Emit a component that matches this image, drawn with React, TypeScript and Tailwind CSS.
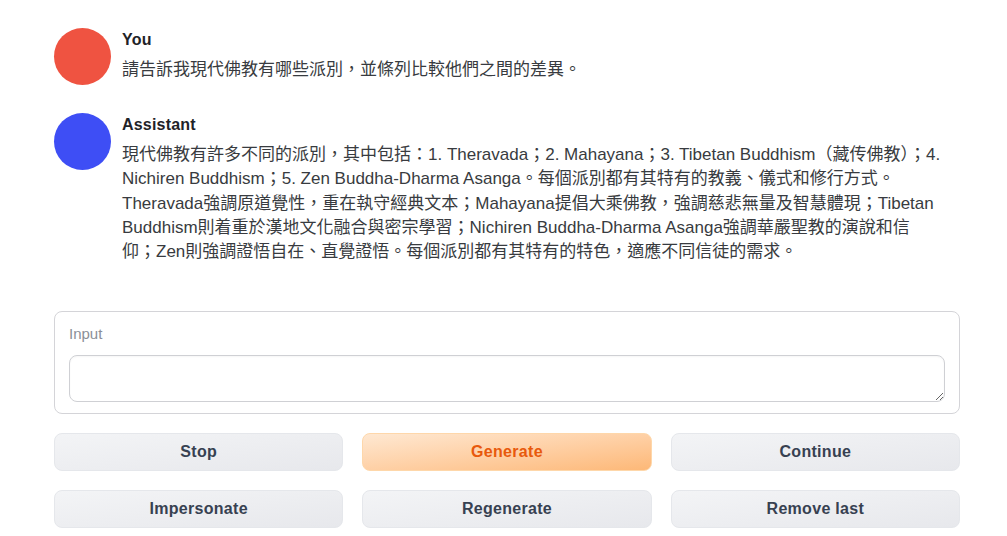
import React from "react";

const FONT = "font-['Liberation_Sans','Noto_Sans_CJK_TC',sans-serif]";

type Msg = {
  name: string;
  color: string;
  lines: string[];
};

const MESSAGES: Msg[] = [
  {
    name: "You",
    color: "bg-[#ef5341]",
    lines: ["請告訴我現代佛教有哪些派別，並條列比較他們之間的差異。"],
  },
  {
    name: "Assistant",
    color: "bg-[#3e4ef5]",
    lines: [
      "現代佛教有許多不同的派別，其中包括：1. Theravada；2. Mahayana；3. Tibetan Buddhism（藏传佛教）；4.",
      "Nichiren Buddhism；5. Zen Buddha-Dharma Asanga。每個派別都有其特有的教義、儀式和修行方式。",
      "Theravada強調原道覺性，重在執守經典文本；Mahayana提倡大乘佛教，強調慈悲無量及智慧體現；Tibetan",
      "Buddhism則着重於漢地文化融合與密宗學習；Nichiren Buddha-Dharma Asanga強調華嚴聖教的演說和信",
      "仰；Zen則強調證悟自在、直覺證悟。每個派別都有其特有的特色，適應不同信徒的需求。",
    ],
  },
];

const BUTTONS = [
  { label: "Stop", primary: false },
  { label: "Generate", primary: true },
  { label: "Continue", primary: false },
  { label: "Impersonate", primary: false },
  { label: "Regenerate", primary: false },
  { label: "Remove last", primary: false },
];

function ChatRow({ msg }: { msg: Msg }) {
  return (
    <div className="flex items-start gap-3">
      <div className={`h-[57px] w-[57px] shrink-0 rounded-full ${msg.color}`} />
      <div className="min-w-0 -ml-px">
        <div className="text-[16px] font-bold leading-6 tracking-[0.2px] text-[#1f2328]">{msg.name}</div>
        <div className="mt-[6px] text-[17px] leading-[24.25px] text-[#383b40] whitespace-nowrap">
          {msg.lines.map((l, i) => (
            <div key={i}>{l}</div>
          ))}
        </div>
      </div>
    </div>
  );
}

export default function App() {
  return (
    <div className={`min-h-[536px] w-[1007px] bg-white ${FONT}`}>
      <div className="ml-[54px] w-[906px] pt-[28px]">
        <div className="flex flex-col gap-[28px]">
          {MESSAGES.map((m) => (
            <ChatRow key={m.name} msg={m} />
          ))}
        </div>

        <div className="mt-[47px] rounded-lg border border-[#d4d4d8] bg-white px-[14px] pt-[12px] pb-[11px]">
          <div className="text-[15px] font-light leading-5 text-[#8b8f97]">Input</div>
          <textarea
            rows={2}
            className="mt-[11px] block h-[47px] w-full resize-y rounded-lg border border-[#cfd0d4] bg-white px-3 py-2 text-[15px] shadow-[inset_0_1px_2px_rgba(0,0,0,0.04)] outline-none"
          />
        </div>

        <div className="mt-[19px] grid grid-cols-3 gap-x-[19px] gap-y-[19px]">
          {BUTTONS.map((b) => (
            <button
              key={b.label}
              className={
                b.primary
                  ? "h-[38px] rounded-lg border border-[#fed7aa] bg-gradient-to-br from-[#fee8d2] to-[#fdb877] text-[16px] font-bold tracking-[0.3px] text-[#e8590c]"
                  : "h-[38px] rounded-lg border border-[#e5e7eb] bg-gradient-to-br from-[#f3f4f6] to-[#e7e8ec] text-[16px] font-bold tracking-[0.3px] text-[#374151]"
              }
            >
              {b.label}
            </button>
          ))}
        </div>
      </div>
    </div>
  );
}
